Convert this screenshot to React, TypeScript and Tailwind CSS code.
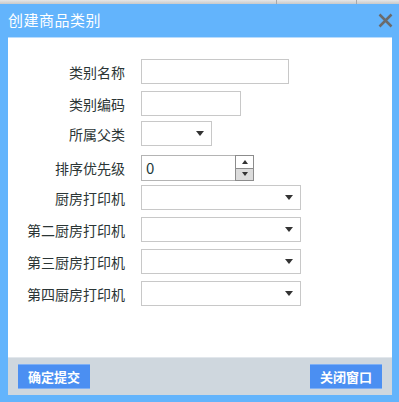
export default function App() {
  const font = { fontFamily: '"Noto Sans CJK SC", "Noto Sans", sans-serif' }

  const Arrow = () => (
    <svg width="8" height="5" viewBox="0 0 8 5" className="shrink-0">
      <path d="M0 0 H8 L4 5 Z" fill="#333" />
    </svg>
  )

  const Label = ({ text }: { text: string }) => (
    <div className="w-[117px] shrink-0 text-right text-[14px] leading-none text-[#2b3535]">{text}</div>
  )

  const Select = ({ w }: { w: string }) => (
    <div className={`${w} h-[25px] border border-[#c8c8c8] bg-white flex items-center justify-end pr-[7px]`}>
      <Arrow />
    </div>
  )

  const printers = ["厨房打印机", "第二厨房打印机", "第三厨房打印机", "第四厨房打印机"]

  return (
    <div className="w-[399px] h-[402px] flex flex-col bg-[#63b4fc]" style={font}>
      {/* top strip */}
      <div className="h-[4px] flex bg-gradient-to-b from-[#e6e6e6] to-[#c9c9c9]">
        <div className="w-[277px] border-r border-[#a8a8a8]" />
        <div className="w-[80px] border-r border-[#a8a8a8]" />
      </div>

      {/* title bar */}
      <div className="h-[33px] flex items-center justify-between pl-[8px] pr-[6px]">
        <span className="text-[15px] text-white tracking-[0.5px]">创建商品类别</span>
        <svg width="15" height="15" viewBox="0 0 15 15">
          <path d="M1.5 1.5 L13.5 13.5 M13.5 1.5 L1.5 13.5" stroke="#6b6b6b" strokeWidth="2.5" />
        </svg>
      </div>

      {/* body */}
      <div className="flex-1 flex flex-col ml-[8px] mr-[7px] mb-[7px]">
        <div className="flex-1 bg-white border-t border-[#b9dcfd] pt-[21px] flex flex-col">
          <div className="flex items-center gap-[16px]">
            <Label text="类别名称" />
            <div className="w-[148px] h-[25px] border border-[#c8c8c8]" />
          </div>
          <div className="flex items-center gap-[16px] mt-[7px]">
            <Label text="类别编码" />
            <div className="w-[100px] h-[25px] border border-[#c8c8c8]" />
          </div>
          <div className="flex items-center gap-[16px] mt-[5px]">
            <Label text="所属父类" />
            <Select w="w-[71px]" />
          </div>
          <div className="flex items-center gap-[16px] mt-[9px]">
            <Label text="排序优先级" />
            <div className="flex h-[26px]">
              <div className="w-[94px] border border-[#b4b4b4] border-r-0 flex items-center pl-[4px] text-[15px] text-[#1d3a3a]">0</div>
              <div className="w-[19px] flex flex-col border border-[#8c8c8c]">
                <div className="flex-1 bg-white flex items-center justify-center border-b border-[#8c8c8c]">
                  <svg width="6" height="4" viewBox="0 0 6 4">
                    <path d="M0 4 H6 L3 0 Z" fill="#333" />
                  </svg>
                </div>
                <div className="flex-1 bg-[#dcdcdc] flex items-center justify-center">
                  <svg width="6" height="4" viewBox="0 0 6 4">
                    <path d="M0 0 H6 L3 4 Z" fill="#333" />
                  </svg>
                </div>
              </div>
            </div>
          </div>
          {printers.map((p, i) => (
            <div key={p} className={`flex items-center gap-[16px] ${i === 0 ? "mt-[4px]" : "mt-[7px]"}`}>
              <Label text={p} />
              <Select w="w-[160px]" />
            </div>
          ))}
        </div>

        {/* footer */}
        <div className="h-[38px] bg-[#cfd7de] border-t border-[#e2e7ec] flex items-center justify-between px-[10px]">
          <button className="w-[72px] h-[25px] bg-[#4b8ff2] border-y border-[#7fb0f5] text-white text-[13px] font-bold">确定提交</button>
          <button className="w-[72px] h-[25px] bg-[#4b8ff2] border-y border-[#7fb0f5] text-white text-[13px] font-bold">关闭窗口</button>
        </div>
      </div>
    </div>
  )
}
